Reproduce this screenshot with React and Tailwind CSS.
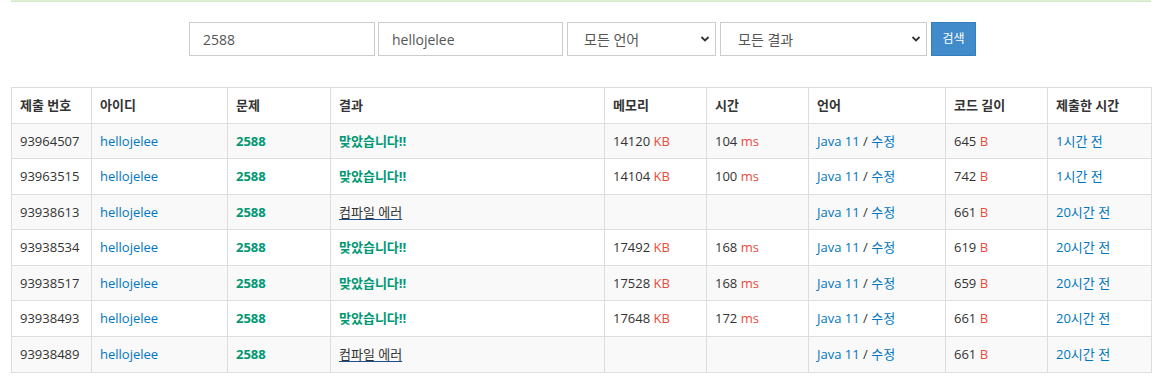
import React from "react";

const rows = [
  { id: "93964507", ok: true, mem: "14120", time: "104", len: "645", when: "1시간 전", striped: true },
  { id: "93963515", ok: true, mem: "14104", time: "100", len: "742", when: "1시간 전", striped: false },
  { id: "93938613", ok: false, mem: "", time: "", len: "661", when: "20시간 전", striped: true },
  { id: "93938534", ok: true, mem: "17492", time: "168", len: "619", when: "20시간 전", striped: false },
  { id: "93938517", ok: true, mem: "17528", time: "168", len: "659", when: "20시간 전", striped: true },
  { id: "93938493", ok: true, mem: "17648", time: "172", len: "661", when: "20시간 전", striped: false },
  { id: "93938489", ok: false, mem: "", time: "", len: "661", when: "20시간 전", striped: true },
];

const headers = ["제출 번호", "아이디", "문제", "결과", "메모리", "시간", "언어", "코드 길이", "제출한 시간"];
const widths = ["w-[80px]", "w-[136px]", "w-[103px]", "w-[274px]", "w-[102px]", "w-[102px]", "w-[137px]", "w-[102px]", "w-[104px]"];

function Chevron() {
  return (
    <svg width="10" height="7" viewBox="0 0 10 7" className="pointer-events-none absolute right-[5px] top-1/2 -translate-y-1/2">
      <path d="M1.5 1.5 L5 5 L8.5 1.5" fill="none" stroke="#333" strokeWidth="1.8" />
    </svg>
  );
}

export default function App() {
  const font = { fontFamily: '"Open Sans", "Noto Sans CJK KR", sans-serif' };
  return (
    <div className="w-[1162px] h-[391px] bg-white text-[#333]" style={font}>
      <div className="mx-[11px] h-[2px] bg-[#dff0d8] border-b border-[#d6e9c6]" />
      <div className="flex justify-center items-center mt-[20px] pl-[3px]">
        <div className="w-[186px] h-[34px] border border-[#ccc] flex items-center px-[13px] text-[14px] text-[#555]">2588</div>
        <div className="ml-[3px] w-[185px] h-[34px] border border-[#ccc] flex items-center px-[13px] text-[14px] text-[#555]">hellojelee</div>
        <div className="ml-[4px] relative w-[149px] h-[34px] border border-[#ccc] flex items-center pl-[16px] text-[14px] text-[#555]">
          모든 언어
          <Chevron />
        </div>
        <div className="ml-[4px] relative w-[207px] h-[34px] border border-[#ccc] flex items-center pl-[17px] text-[14px] text-[#555]">
          모든 결과
          <Chevron />
        </div>
        <div className="ml-[4px] w-[45px] h-[34px] bg-[#428bca] border border-[#357ebd] flex items-center justify-center text-white text-[12px]">검색</div>
      </div>
      <div className="mx-[11px] mt-[31px]">
        <table className="w-full table-fixed border-collapse text-[13px] leading-[18.57px]">
          <thead>
            <tr>
              {headers.map((h, i) => (
                <th key={h} className={`${widths[i]} border border-[#ddd] p-[8px] text-left font-bold`}>{h}</th>
              ))}
            </tr>
          </thead>
          <tbody>
            {rows.map((r) => (
              <tr key={r.id} className={r.striped ? "bg-[#f9f9f9]" : "bg-white"}>
                <td className="border border-[#ddd] p-[8px]">{r.id}</td>
                <td className="border border-[#ddd] p-[8px] text-[#0076c0]">hellojelee</td>
                <td className="border border-[#ddd] p-[8px] font-bold text-[#009874]">2588</td>
                <td className="border border-[#ddd] p-[8px]">
                  {r.ok ? (
                    <span className="font-bold text-[#009874]">맞았습니다!!</span>
                  ) : (
                    <span className="underline decoration-[#1f4e8c] underline-offset-[2px] text-[#333]">컴파일 에러</span>
                  )}
                </td>
                <td className="border border-[#ddd] p-[8px]">
                  {r.mem && (<>{r.mem} <span className="text-[#e74c3c]">KB</span></>)}
                </td>
                <td className="border border-[#ddd] p-[8px]">
                  {r.time && (<>{r.time} <span className="text-[#e74c3c]">ms</span></>)}
                </td>
                <td className="border border-[#ddd] p-[8px]">
                  <span className="text-[#0076c0]">Java 11</span> / <span className="text-[#0076c0]">수정</span>
                </td>
                <td className="border border-[#ddd] p-[8px]">
                  {r.len} <span className="text-[#e74c3c]">B</span>
                </td>
                <td className="border border-[#ddd] p-[8px] text-[#0076c0]">{r.when}</td>
              </tr>
            ))}
          </tbody>
        </table>
      </div>
    </div>
  );
}
